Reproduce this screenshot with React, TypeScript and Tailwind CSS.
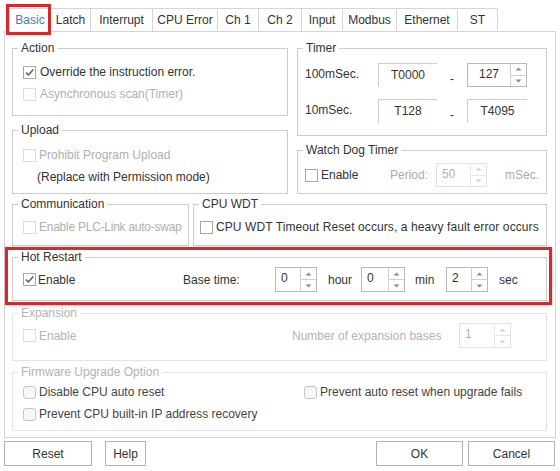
import clsx from 'clsx';
import type { ReactNode } from 'react';

const tabs = [
  { name: 'Basic', w: 'w-[41px]' },
  { name: 'Latch', w: 'w-[40px]' },
  { name: 'Interrupt', w: 'w-[62px]' },
  { name: 'CPU Error', w: 'w-[65px]' },
  { name: 'Ch 1', w: 'w-[41px]' },
  { name: 'Ch 2', w: 'w-[43px]' },
  { name: 'Input', w: 'w-[41px]' },
  { name: 'Modbus', w: 'w-[54px]' },
  { name: 'Ethernet', w: 'w-[61px]' },
  { name: 'ST', w: 'w-[41px]' },
];

function Check({ checked = false, disabled = false, rounded = false }: { checked?: boolean; disabled?: boolean; rounded?: boolean }) {
  return (
    <span
      className={clsx(
        'flex h-[13px] w-[13px] shrink-0 items-center justify-center border',
        rounded ? 'rounded-[3px] border-[#c6c6c6] bg-[#f7f7f7]' : disabled ? 'border-[#dedede] bg-white' : 'border-[#a8a8a8] bg-white'
      )}
    >
      {checked && (
        <svg width="11" height="11" viewBox="0 0 11 11">
          <path d="M2 5.6 4.4 8 9.3 2.6" fill="none" stroke="#5c5c5c" strokeWidth="1.5" />
        </svg>
      )}
    </span>
  );
}

function Spin({ value, w, disabled = false, center = false }: { value: string; w: string; disabled?: boolean; center?: boolean }) {
  const arrow = disabled ? '#d2d2d2' : '#8a8a8a';
  return (
    <div className={clsx('flex h-full border', w, disabled ? 'border-[#e2e2e2]' : 'border-[#b9b9b9]')}>
      <div
        className={clsx(
          'flex flex-1 items-center pb-[3px]',
          center ? 'justify-center' : 'pl-[5px]',
          disabled ? 'text-[#b0b0b0]' : 'text-[#333]'
        )}
      >
        {value}
      </div>
      <div className={clsx('flex w-[16px] flex-col border-l', disabled ? 'border-[#e6e6e6]' : 'border-[#d0d0d0]')}>
        <div className="flex flex-1 items-center justify-center">
          <svg width="7" height="4" viewBox="0 0 7 4">
            <path d="M0.5 3.5 3.5 0.5 6.5 3.5Z" fill={arrow} />
          </svg>
        </div>
        <div className={clsx('flex flex-1 items-center justify-center border-t', disabled ? 'border-[#e6e6e6]' : 'border-[#d0d0d0]')}>
          <svg width="7" height="4" viewBox="0 0 7 4">
            <path d="M0.5 0.5 3.5 3.5 6.5 0.5Z" fill={arrow} />
          </svg>
        </div>
      </div>
    </div>
  );
}

function Group({ label, dim = false, tight = false, className, children }: { label: string; dim?: boolean; tight?: boolean; className?: string; children: ReactNode }) {
  return (
    <fieldset className={clsx('border', dim ? 'border-[#e4e4e4]' : 'border-[#cdcdcd]', className)}>
      <legend className={clsx('ml-[5px] px-[3px]', tight ? 'leading-[14px]' : 'leading-[16px]', dim ? 'text-[#b3b3b3]' : 'text-[#333]')}>
        {label}
      </legend>
      {children}
    </fieldset>
  );
}

function Field({ text }: { text: string }) {
  return <div className="flex h-full w-[59px] items-center justify-center border-l border-t border-[#cfcfcf] pb-[1px]">{text}</div>;
}

function Button({ label, w, className }: { label: string; w: string; className?: string }) {
  return (
    <button className={clsx('flex h-[25px] items-center justify-center border border-[#b4b4b4] bg-white text-[#333]', w, className)}>
      {label}
    </button>
  );
}

export default function App() {
  return (
    <div className="flex h-[471px] w-[560px] flex-col overflow-hidden bg-white font-['Liberation_Sans',Arial,sans-serif] text-[12px] text-[#333]">
      {/* tabs */}
      <div className="ml-[9px] mt-[8px] flex h-[23px]">
        {tabs.map((t, i) => (
          <div
            key={t.name}
            className={clsx(
              'relative flex items-center justify-center border-l border-t border-[#d6d6d6] bg-white',
              t.w,
              i === tabs.length - 1 && 'border-r',
              i === 0 ? 'z-10 h-[24px] pb-[1px] text-[#3a7cc6]' : 'h-[23px]'
            )}
          >
            {t.name}
            {i === 0 && <span className="absolute -bottom-[3px] -left-[4px] -right-[1px] -top-[5px] border-[3px] border-[#d32a2e]" />}
          </div>
        ))}
      </div>

      {/* panel */}
      <div className="ml-[4px] flex h-[407px] w-[552px] flex-col border border-[#d5d5d5] px-[7px] pt-[8px]">
        <div className="flex gap-[9px]">
          <div className="flex w-[276px] flex-col gap-[6px]">
            <Group label="Action" className="h-[76px]">
              <div className="flex flex-col pl-[10px] pt-[5px]">
                <div className="flex h-[22px] items-center gap-[4px]">
                  <Check checked />
                  <span>Override the instruction error.</span>
                </div>
                <div className="flex h-[22px] items-center gap-[4px] text-[#b0b0b0]">
                  <Check disabled />
                  <span>Asynchronous scan(Timer)</span>
                </div>
              </div>
            </Group>
            <Group label="Upload" className="h-[72px]">
              <div className="flex flex-col pl-[10px] pt-[6px]">
                <div className="flex h-[22px] items-center gap-[3px] text-[#b0b0b0]">
                  <Check disabled />
                  <span>Prohibit Program Upload</span>
                </div>
                <div className="flex h-[21px] items-center pl-[14px]">(Replace with Permission mode)</div>
              </div>
            </Group>
          </div>

          <div className="flex w-[250px] flex-col gap-[6px]">
            <Group label="Timer" className="h-[96px]">
              <div className="flex flex-col gap-[12px] pl-[7px] pt-[7px]">
                <div className="flex h-[24px] items-center">
                  <span className="w-[73px] pb-[2px]">100mSec.</span>
                  <Field text="T0000" />
                  <span className="w-[30px] translate-y-[4px] text-center">-</span>
                  <Spin value="127" w="w-[60px]" center />
                </div>
                <div className="flex h-[24px] items-center">
                  <span className="w-[73px] pb-[2px]">10mSec.</span>
                  <Field text="T128" />
                  <span className="w-[30px] translate-y-[4px] text-center">-</span>
                  <div className="flex h-full w-[60px] items-center justify-center border-l border-t border-[#cfcfcf] pb-[1px]">T4095</div>
                </div>
              </div>
            </Group>
            <Group label="Watch Dog Timer" className="h-[52px]">
              <div className="flex h-[29px] items-center pl-[7px] pt-[5px]">
                <div className="flex w-[85px] items-center gap-[3px]">
                  <Check />
                  <span>Enable</span>
                </div>
                <span className="w-[46px] text-[#acacac]">Period:</span>
                <Spin value="50" w="w-[51px]" disabled />
                <span className="ml-[18px] text-[#acacac]">mSec.</span>
              </div>
            </Group>
          </div>
        </div>

        <div className="mt-[2px] flex gap-[4px]">
          <Group label="Communication" className="h-[50px] w-[177px]">
            <div className="flex h-[26px] items-center gap-[3px] pl-[10px] pt-[4px] text-[#b0b0b0]">
              <Check disabled />
              <span className="whitespace-nowrap tracking-[-0.25px]">Enable PLC-Link auto-swap</span>
            </div>
          </Group>
          <Group label="CPU WDT" className="h-[50px] w-[354px]">
            <div className="flex h-[26px] items-center gap-[3px] pl-[6px] pt-[4px]">
              <Check />
              <span className="whitespace-nowrap tracking-[0.1px]">CPU WDT Timeout Reset occurs, a heavy fault error occurs</span>
            </div>
          </Group>
        </div>

        {/* highlighted hot restart */}
        <div className="-ml-[7px] mt-[1px] h-[58px] w-[547px] border-[3px] border-[#d32a2e] pl-[4px] shadow-[0_0_2px_rgba(211,42,46,0.45)]">
          <Group label="Hot Restart" tight className="h-[51px] w-[535px]">
            <div className="flex h-[28px] items-center pl-[10px] pt-[3px]">
              <div className="flex w-[160px] items-center gap-[2px]">
                <Check checked />
                <span>Enable</span>
              </div>
              <span className="w-[92px]">Base time:</span>
              <Spin value="0" w="w-[42px]" />
              <span className="ml-[11px] w-[33px]">hour</span>
              <Spin value="0" w="w-[44px]" />
              <span className="ml-[10px] w-[31px]">min</span>
              <Spin value="2" w="w-[42px]" />
              <span className="ml-[11px]">sec</span>
            </div>
          </Group>
        </div>

        <Group label="Expansion" dim className="h-[56px] w-[535px]">
          <div className="flex h-[27px] items-center pl-[10px] pt-[2px] text-[#b3b3b3]">
            <div className="flex w-[269px] items-center gap-[3px]">
              <Check disabled />
              <span>Enable</span>
            </div>
            <span className="w-[167px]">Number of expansion bases</span>
            <Spin value="1" w="w-[52px]" disabled />
          </div>
        </Group>

        <Group label="Firmware Upgrade Option" dim className="mt-[3px] h-[67px] w-[535px]">
          <div className="flex flex-col pl-[10px] pt-[1px] text-[#444]">
            <div className="flex h-[22px] items-center">
              <div className="flex w-[281px] items-center gap-[3px]">
                <Check rounded />
                <span>Disable CPU auto reset</span>
              </div>
              <div className="flex items-center gap-[3px]">
                <Check rounded />
                <span>Prevent auto reset when upgrade fails</span>
              </div>
            </div>
            <div className="flex h-[22px] items-center gap-[3px]">
              <Check rounded />
              <span>Prevent CPU built-in IP address recovery</span>
            </div>
          </div>
        </Group>
      </div>

      {/* bottom buttons */}
      <div className="mt-[3px] flex pl-[4px] pr-[5px]">
        <Button label="Reset" w="w-[88px]" />
        <Button label="Help" w="w-[41px]" className="ml-[13px]" />
        <Button label="OK" w="w-[87px]" className="ml-auto" />
        <Button label="Cancel" w="w-[87px]" className="ml-[5px]" />
      </div>
    </div>
  );
}
